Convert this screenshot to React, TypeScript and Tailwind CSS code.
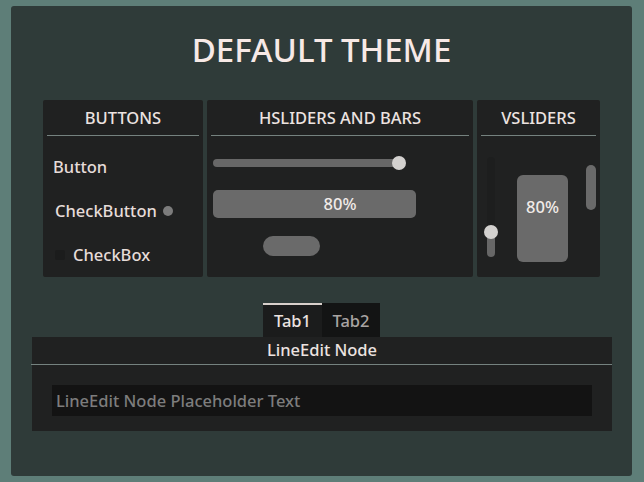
import React from "react";

const FONT = { fontFamily: '"Noto Sans", "Open Sans", sans-serif' };

function PanelHeader({ title }: { title: string }) {
  return (
    <div>
      <div className="flex h-[35px] items-center justify-center pt-[1px] text-[16.5px] text-[#ece3e0]">
        {title}
      </div>
      <div className="mx-1 h-px bg-[#75827f]" />
    </div>
  );
}

export default function App() {
  return (
    <div className="h-[482px] w-[644px] bg-[#5e7e78] pb-[6px] pl-[11px] pr-[12px] pt-[6px] font-medium" style={FONT}>
      <div className="flex h-full flex-col rounded-[3px] bg-[#2f3b39]">
        {/* Title */}
        <h1 className="mt-[24px] h-[40px] text-center text-[33px] leading-[40px] text-[#f7e9e6]">
          DEFAULT THEME
        </h1>

        {/* Top panels */}
        <div className="mt-[30px] flex gap-1 px-8">
          {/* Buttons */}
          <div className="h-[177px] w-[160px] rounded-[2px] bg-[#202121]">
            <PanelHeader title="BUTTONS" />
            <div className="flex flex-col pt-[9px] text-[16.5px] text-[#e6dcd9]">
              <div className="flex h-[44px] items-center pl-[10px]">Button</div>
              <div className="flex h-[44px] items-center pl-[12px]">
                CheckButton
                <span className="ml-[6px] h-[10px] w-[10px] rounded-full bg-[#7c7c7c]" />
              </div>
              <div className="flex h-[44px] items-center pl-[12px]">
                <span className="mr-[8px] h-[10px] w-[10px] rounded-[2px] bg-[#1b1c1c]" />
                CheckBox
              </div>
            </div>
          </div>

          {/* HSliders and bars */}
          <div className="h-[177px] w-[266px] rounded-[2px] bg-[#202121]">
            <PanelHeader title="HSLIDERS AND BARS" />
            <div className="flex flex-col px-[6px] pt-[20px]">
              <div className="relative flex h-[14px] w-[194px] items-center">
                <div className="h-[8px] w-[187px] rounded-full bg-[#676767]" />
                <div className="absolute left-[179px] top-0 h-[14px] w-[14px] rounded-full bg-[#d3d1cf]" />
              </div>
              <div className="relative mt-[20px] h-[28px] w-[254px]">
                <div className="h-full w-[80%] rounded-[5px] bg-[#6a6a6a]" />
                <div className="absolute inset-0 flex items-center justify-center text-[16.5px] text-[#f1ebe8]">80%</div>
              </div>
              <div className="ml-[50px] mt-[18px] h-[20px] w-[57px] rounded-full bg-[#6a6a6a]" />
            </div>
          </div>

          {/* VSliders */}
          <div className="h-[177px] w-[123px] rounded-[2px] bg-[#202121]">
            <PanelHeader title="VSLIDERS" />
            <div className="flex items-end pb-[15px] pl-[7px] pt-[17px]">
              <div className="relative mb-[5px] flex h-[102px] w-[14px] flex-col items-center justify-end">
                <div className="h-[100px] w-[8px] rounded-full bg-[#1d1e1e]" />
                <div className="absolute bottom-0 h-[26px] w-[8px] rounded-full bg-[#676767]" />
                <div className="absolute bottom-[18px] h-[14px] w-[14px] rounded-full bg-[#d3d1cf]" />
              </div>
              <div className="relative ml-[19px] flex h-[109px] w-[51px] flex-col justify-end">
                <div className="h-[80%] w-full rounded-[6px] bg-[#6a6a6a]" />
                <div className="absolute inset-0 flex items-center justify-center text-[16.5px] text-[#f1ebe8]">80%</div>
              </div>
              <div className="mb-[52px] ml-[18px] h-[45px] w-[10px] rounded-full bg-[#6a6a6a]" />
            </div>
          </div>
        </div>

        {/* Tabs */}
        <div className="mt-[26px] flex justify-center text-[16.5px]">
          <div className="flex h-[34px] w-[59px] items-center justify-center border-t-2 border-[#d8d0cb] bg-[#1b1c1c] text-[#ece3e0]">
            Tab1
          </div>
          <div className="flex h-[34px] w-[58px] items-center justify-center border-t-2 border-transparent bg-[#131414] text-[#a9a4a2]">
            Tab2
          </div>
        </div>

        {/* LineEdit panel */}
        <div className="ml-[21px] mr-[20px] h-[94px] bg-[#202121]">
          <div className="flex h-[27px] items-center justify-center text-[16.5px] text-[#ece3e0]">LineEdit Node</div>
          <div className="-ml-px h-px bg-[#75827f]" />
          <div className="px-5 pt-[20px]">
            <div className="flex h-[31px] items-center bg-[#131313] pl-1 pt-[2px] text-[16.5px] text-[#7d7d7d]">
              LineEdit Node Placeholder Text
            </div>
          </div>
        </div>
      </div>
    </div>
  );
}
